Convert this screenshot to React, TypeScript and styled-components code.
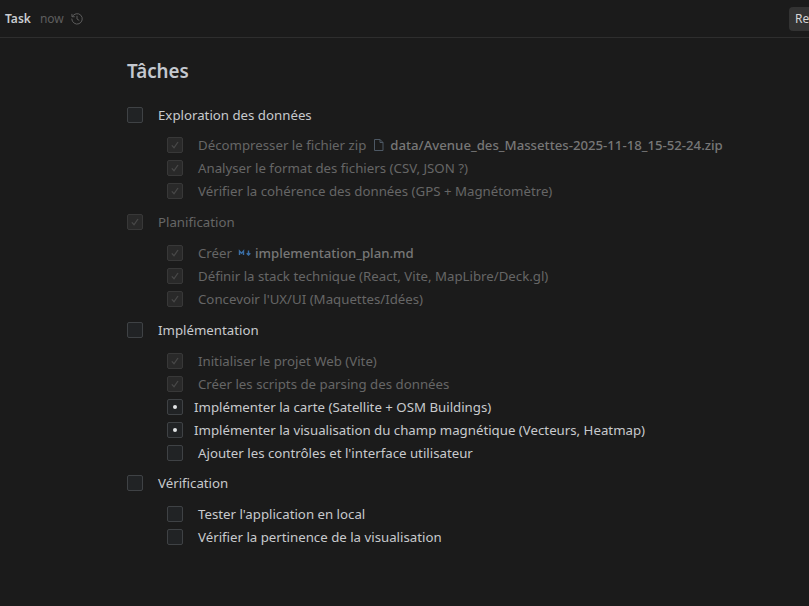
import React from "react";
import styled, { createGlobalStyle } from "styled-components";

const GlobalStyle = createGlobalStyle`
  html, body {
    margin: 0;
    padding: 0;
    height: 100%;
    background: #1b1b1b;
    overflow: hidden;
  }
  body {
    font-family: "Noto Sans", "Open Sans", sans-serif;
    font-size: 13.25px;
    color: #d8dadd;
  }
`;

const Page = styled.div`
  width: 809px;
  height: 606px;
  overflow: hidden;
  background: #1b1b1b;
`;

const TopBar = styled.header`
  height: 37px;
  border-bottom: 1px solid #2e2e2e;
  display: flex;
  align-items: center;
  padding-left: 5px;
  box-sizing: content-box;
`;

const BarTitle = styled.span`
  font-size: 12px;
  font-weight: 600;
  color: #c9ccd1;
  margin-right: 9px;
`;

const BarTime = styled.span`
  font-size: 12px;
  color: #5e5e5e;
  margin-right: 6px;
`;

const ReviewButton = styled.button`
  margin-left: auto;
  width: 20px;
  height: 24px;
  padding: 0 0 0 6px;
  border: none;
  border-radius: 4px 0 0 4px;
  background: #333333;
  color: #d5d5d5;
  font: 12px "Noto Sans", sans-serif;
  text-align: left;
  overflow: hidden;
  white-space: nowrap;
`;

const Content = styled.main`
  padding: 20px 0 0 127px;
`;

const Title = styled.h1`
  margin: 0 0 18.1px;
  font-size: 18.8px;
  line-height: 27px;
  font-weight: 600;
  color: #c4c8cf;
`;

const Section = styled.section`
  margin-bottom: 7.8px;
`;

const SubList = styled.div`
  margin: 7.8px 0 0 40px;
`;

const Row = styled.div`
  height: 23px;
  display: flex;
  align-items: center;
  white-space: nowrap;
`;

const Box = styled.span<{ $done?: boolean }>`
  flex: none;
  width: 16px;
  height: 16px;
  box-sizing: border-box;
  border: 1px solid ${(p) => (p.$done ? "#383838" : "#3f4245")};
  border-radius: 2px;
  background: ${(p) => (p.$done ? "#292929" : "#212325")};
  display: flex;
  align-items: center;
  justify-content: center;
`;

const Dot = styled.span`
  width: 4px;
  height: 4px;
  border-radius: 50%;
  background: #e2e4e6;
`;

const Label = styled.span<{ $state: "todo" | "done" | "active" }>`
  margin-left: ${(p) => (p.$state === "active" ? "11px" : "15px")};
  font-size: 13.25px;
  line-height: 18px;
  color: ${(p) => (p.$state === "done" ? "#666666" : "#c8cacd")};
  display: flex;
  align-items: center;
`;

const FileLink = styled.span`
  font-size: 13.2px;
  font-weight: 500;
  color: #777777;
`;

const FileIcon = styled.svg<{ $gap: number }>`
  margin: 0 ${(p) => p.$gap}px 0 6px;
  flex: none;
`;

const HistoryIcon = () => (
  <svg width="14" height="14" viewBox="0 0 16 16" fill="none" stroke="#5e5e5e" strokeWidth="1.1" strokeLinecap="round" strokeLinejoin="round">
    <path d="M2.6 5.2A6 6 0 1 1 2 8" />
    <path d="M2.2 2.6v2.8H5" />
    <path d="M8 4.8V8l2.2 1.4" />
  </svg>
);

const Check = () => (
  <svg width="12" height="12" viewBox="0 0 12 12" fill="none" stroke="#484848" strokeWidth="1.3">
    <path d="M2.8 6.4l2.2 2.4 4-5.8" />
  </svg>
);

const PageIcon = () => (
  <FileIcon $gap={4} width="14" height="14" viewBox="0 0 14 14" fill="none" stroke="#4d5864" strokeWidth="1">
    <path d="M2.5 1.5h5.5l3 3v8H2.5z" />
    <path d="M8 1.5v3h3" />
  </FileIcon>
);

const MarkdownIcon = () => (
  <FileIcon $gap={3} width="14" height="14" viewBox="0 0 14 14" fill="none" stroke="#3a6ea5" strokeWidth="1.4">
    <path d="M1.5 9v-4l2 2.2 2-2.2v4" />
    <path d="M10.5 4.5v4.5M8.7 7.3l1.8 1.8 1.8-1.8" />
  </FileIcon>
);

type State = "todo" | "done" | "active";

const Item = ({ state, children }: { state: State; children: React.ReactNode }) => (
  <Row>
    <Box $done={state === "done"}>
      {state === "done" && <Check />}
      {state === "active" && <Dot />}
    </Box>
    <Label $state={state}>{children}</Label>
  </Row>
);

export default function App() {
  return (
    <Page>
      <GlobalStyle />
      <TopBar>
        <BarTitle>Task</BarTitle>
        <BarTime>now</BarTime>
        <HistoryIcon />
        <ReviewButton>Review</ReviewButton>
      </TopBar>
      <Content>
        <Title>Tâches</Title>

        <Section>
          <Item state="todo">Exploration des données</Item>
          <SubList>
            <Item state="done">
              Décompresser le fichier zip
              <PageIcon />
              <FileLink>data/Avenue_des_Massettes-2025-11-18_15-52-24.zip</FileLink>
            </Item>
            <Item state="done">Analyser le format des fichiers (CSV, JSON ?)</Item>
            <Item state="done">Vérifier la cohérence des données (GPS + Magnétomètre)</Item>
          </SubList>
        </Section>

        <Section>
          <Item state="done">Planification</Item>
          <SubList>
            <Item state="done">
              Créer
              <MarkdownIcon />
              <FileLink>implementation_plan.md</FileLink>
            </Item>
            <Item state="done">Définir la stack technique (React, Vite, MapLibre/Deck.gl)</Item>
            <Item state="done">Concevoir l'UX/UI (Maquettes/Idées)</Item>
          </SubList>
        </Section>

        <Section>
          <Item state="todo">Implémentation</Item>
          <SubList>
            <Item state="done">Initialiser le projet Web (Vite)</Item>
            <Item state="done">Créer les scripts de parsing des données</Item>
            <Item state="active">Implémenter la carte (Satellite + OSM Buildings)</Item>
            <Item state="active">Implémenter la visualisation du champ magnétique (Vecteurs, Heatmap)</Item>
            <Item state="todo">Ajouter les contrôles et l'interface utilisateur</Item>
          </SubList>
        </Section>

        <Section>
          <Item state="todo">Vérification</Item>
          <SubList>
            <Item state="todo">Tester l'application en local</Item>
            <Item state="todo">Vérifier la pertinence de la visualisation</Item>
          </SubList>
        </Section>
      </Content>
    </Page>
  );
}
